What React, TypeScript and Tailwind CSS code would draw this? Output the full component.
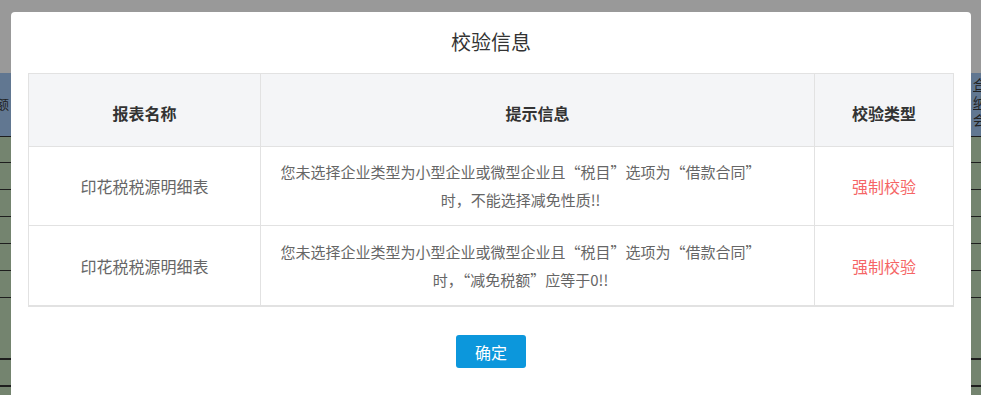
const rows = [
  {
    name: "印花税税源明细表",
    lines: ["您未选择企业类型为小型企业或微型企业且“税目”选项为“借款合同”", "时，不能选择减免性质!!"],
    type: "强制校验",
  },
  {
    name: "印花税税源明细表",
    lines: ["您未选择企业类型为小型企业或微型企业且“税目”选项为“借款合同”", "时，“减免税额”应等于0!!"],
    type: "强制校验",
  },
];

const font = { fontFamily: '"Microsoft YaHei", "Noto Sans CJK SC", "Noto Sans", sans-serif' };

const BackgroundPage = () => {
  return (
    <div className="flex flex-col w-full h-full">
      <div className="flex-none h-[73px] bg-[#999999]" />
      <div className="flex-none h-[63px] bg-[#617791] flex justify-between text-[13px] text-[#222] leading-[14px]">
        <span className="-ml-[4px] mt-[24px]">额</span>
        <div className="flex flex-col -mr-[2px] w-[10px] overflow-hidden">
          <span className="border-b border-[#222] pt-[4px]">合</span>
          <span className="border-b border-[#222] pt-[3px]">纳</span>
          <span className="pt-[3px]">会</span>
        </div>
      </div>
      <div className="flex-1 bg-[#74846f] flex flex-col overflow-hidden">
        <div className="flex-none h-[26px] border-t border-[#1e1e1e]" />
        <div className="flex-none h-[27px] border-t border-[#1e1e1e]" />
        <div className="flex-none h-[27px] border-t border-[#1e1e1e]" />
        <div className="flex-none h-[27px] border-t border-[#1e1e1e]" />
        <div className="flex-none h-[27px] border-t border-[#1e1e1e]" />
        <div className="flex-none h-[27px] border-t border-[#1e1e1e]" />
        <div className="flex-none h-[61px] border-t border-[#1e1e1e]" />
        <div className="flex-none h-[27px] border-t-2 border-[#1e1e1e]" />
        <div className="flex-none h-[27px] border-t-2 border-[#1e1e1e]" />
      </div>
    </div>
  );
};

const App = () => {
  return (
    <div className="relative w-[981px] h-[395px] overflow-hidden bg-[#999999]" style={font}>
      <BackgroundPage />
      <div className="absolute left-[11px] top-[12px] w-[960px] h-[400px] bg-white rounded-[4px] flex flex-col">
        <h2 className="h-[61px] flex items-center justify-center text-[20px] text-[#333] pb-[2px]">
          校验信息
        </h2>
        <div className="mx-[17px] border border-[#e2e2e2] border-b-2">
          <div className="flex h-[73px] bg-[#f4f5f7] text-[16px] font-bold text-[#333] border-b border-[#e2e2e2]">
            <div className="w-[232px] flex items-center justify-center border-r border-[#e2e2e2] pt-[6px]">报表名称</div>
            <div className="w-[554px] flex items-center justify-center border-r border-[#e2e2e2] pt-[6px]">提示信息</div>
            <div className="flex-1 flex items-center justify-center pt-[5px]">校验类型</div>
          </div>
          {rows.map((r, i) => (
            <div
              key={i}
              className={`flex h-[79px] text-[16px] text-[#666] ${i === 0 ? "border-b border-[#e2e2e2]" : ""}`}
            >
              <div className="w-[232px] flex items-center justify-center border-r border-[#e2e2e2]">{r.name}</div>
              <div className="w-[554px] flex flex-col items-center justify-center border-r border-[#e2e2e2] text-[15px] leading-[28px] pr-[34px]">
                {r.lines.map((l, j) => (
                  <span key={j}>{l}</span>
                ))}
              </div>
              <div className="flex-1 flex items-center justify-center text-[#f56565]">{r.type}</div>
            </div>
          ))}
        </div>
        <div className="flex justify-center pt-[28px]">
          <button className="w-[70px] h-[33px] rounded-[3px] bg-[#0c97dc] text-white text-[16px]">确定</button>
        </div>
      </div>
    </div>
  );
};

export default App;
